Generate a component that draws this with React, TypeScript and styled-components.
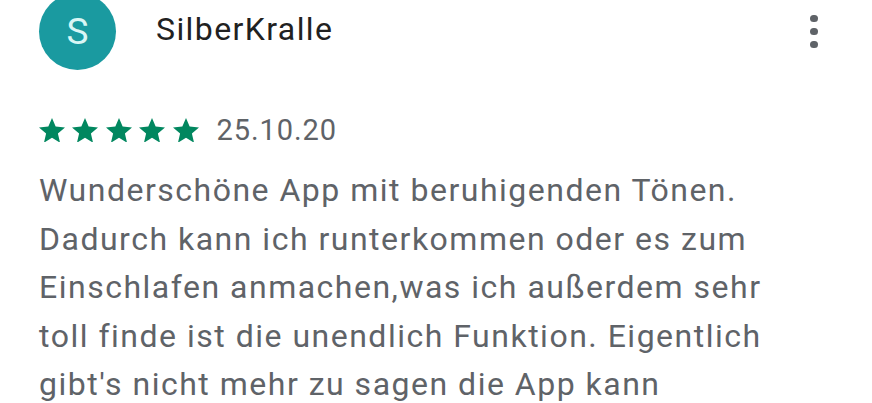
import styled, { createGlobalStyle } from 'styled-components';

const GlobalStyle = createGlobalStyle`
  html, body {
    margin: 0;
    padding: 0;
    background: #ffffff;
    font-family: Roboto, "Noto Sans", sans-serif;
  }
`;

const Card = styled.div`
  width: 872px;
  height: 403px;
  overflow: hidden;
  box-sizing: border-box;
  padding: 0 0 0 39px;
`;

const Header = styled.div`
  display: flex;
  align-items: center;
  height: 63px;
`;

const Avatar = styled.div`
  width: 77px;
  height: 77px;
  flex: none;
  border-radius: 50%;
  background: #1a9aa0;
  color: #d9f6f5;
  font-size: 37px;
  display: flex;
  align-items: center;
  justify-content: center;
`;

const Name = styled.div`
  margin-left: 40px;
  margin-top: -6px;
  font-size: 32px;
  letter-spacing: 1.4px;
  color: #212121;
  flex: 1;
`;

const MoreButton = styled.div`
  width: 30px;
  display: flex;
  flex-direction: column;
  align-items: center;
  gap: 5.5px;
  margin-right: 43px;
`;

const Dot = styled.span`
  width: 7.5px;
  height: 7.5px;
  border-radius: 50%;
  background: #5f6368;
`;

const MetaRow = styled.div`
  display: flex;
  align-items: center;
  margin-top: 55px;
  height: 24px;
`;

const Stars = styled.div`
  display: flex;
  gap: 7.4px;
`;

const DateText = styled.span`
  margin-left: 18px;
  font-size: 29px;
  letter-spacing: 0.9px;
  color: #5f6368;
`;

const Body = styled.p`
  margin: 24px 0 0;
  font-size: 32px;
  letter-spacing: 1.5px;
  line-height: 48.5px;
  color: #5f6368;
  width: 820px;
  white-space: nowrap;
`;

const Star = () => (
  <svg width="26" height="24.7" viewBox="2 2 20 19">
    <path
      fill="#01875f"
      d="M12 17.27L18.18 21l-1.64-7.03L22 9.24l-7.19-.61L12 2 9.19 8.63 2 9.24l5.46 4.73L5.82 21z"
    />
  </svg>
);

export default function App() {
  return (
    <>
      <GlobalStyle />
      <Card>
        <Header>
          <Avatar>S</Avatar>
          <Name>SilberKralle</Name>
          <MoreButton>
            <Dot />
            <Dot />
            <Dot />
          </MoreButton>
        </Header>
        <MetaRow>
          <Stars>
            {[0, 1, 2, 3, 4].map((i) => (
              <Star key={i} />
            ))}
          </Stars>
          <DateText>25.10.20</DateText>
        </MetaRow>
        <Body>
          Wunderschöne App mit beruhigenden Tönen.
          <br />
          Dadurch kann ich runterkommen oder es zum
          <br />
          Einschlafen anmachen,was ich außerdem sehr
          <br />
          toll finde ist die unendlich Funktion. Eigentlich
          <br />
          gibt's nicht mehr zu sagen die App kann
        </Body>
      </Card>
    </>
  );
}
